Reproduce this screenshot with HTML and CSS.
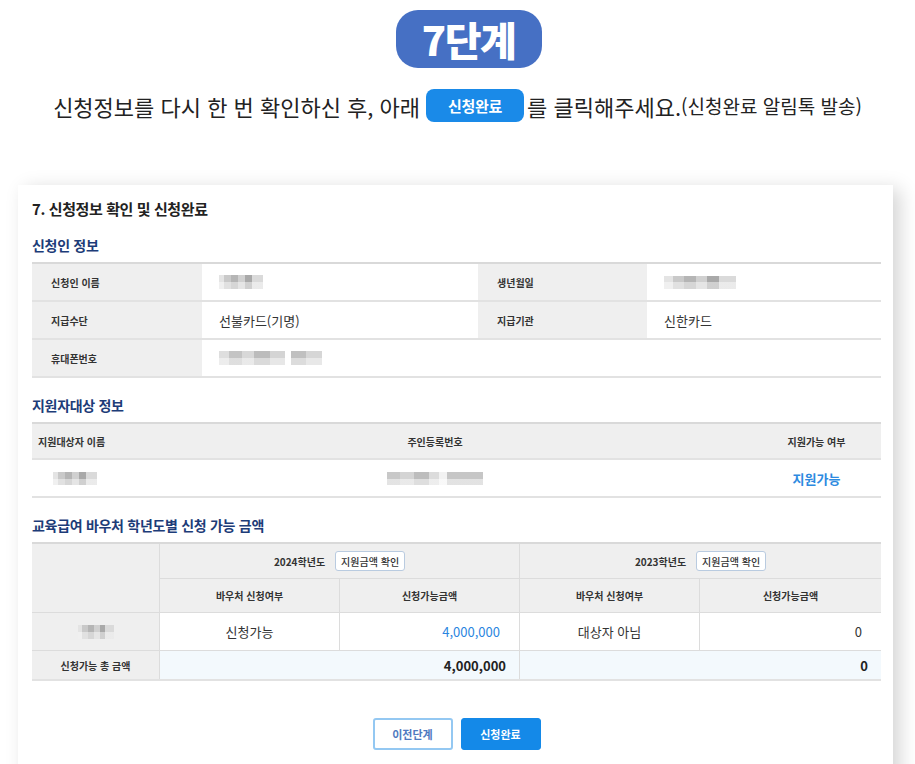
FILE: index.html
```html
<!DOCTYPE html>
<html lang="ko">
<head>
<meta charset="utf-8">
<title>7단계</title>
<link rel="stylesheet" href="styles.css">
</head>
<body>
<header class="step">
  <div class="badge">7단계</div>
  <p class="lead">신청정보를 다시 한 번 확인하신 후, 아래 <span class="pill">신청완료</span>를 클릭해주세요.<small>(신청완료 알림톡 발송)</small></p>
</header>

<main class="card">
  <h1 class="title">7. 신청정보 확인 및 신청완료</h1>

  <h2 class="sec">신청인 정보</h2>
  <div class="info">
    <div class="row">
      <div class="lbl">신청인 이름</div>
      <div class="val"><span class="blur b-name"></span></div>
      <div class="lbl">생년월일</div>
      <div class="val"><span class="blur b-birth"></span></div>
    </div>
    <div class="row">
      <div class="lbl">지급수단</div>
      <div class="val">선불카드(기명)</div>
      <div class="lbl">지급기관</div>
      <div class="val">신한카드</div>
    </div>
    <div class="row">
      <div class="lbl">휴대폰번호</div>
      <div class="val span3"><span class="blur b-phone"></span></div>
    </div>
  </div>

  <h2 class="sec">지원자대상 정보</h2>
  <div class="target">
    <div class="trow thead">
      <div class="c1 h">지원대상자 이름</div>
      <div class="c2">주인등록번호</div>
      <div class="c3">지원가능 여부</div>
    </div>
    <div class="trow tbody">
      <div class="c1"><span class="blur b-tname"></span></div>
      <div class="c2"><span class="blur b-rrn"></span></div>
      <div class="c3 ok">지원가능</div>
    </div>
  </div>

  <h2 class="sec">교육급여 바우처 학년도별 신청 가능 금액</h2>
  <div class="voucher">
    <div class="v-corner"></div>
    <div class="v-year y1">2024학년도 <button class="chk">지원금액 확인</button></div>
    <div class="v-year y2">2023학년도 <button class="chk">지원금액 확인</button></div>
    <div class="v-sub">바우처 신청여부</div>
    <div class="v-sub">신청가능금액</div>
    <div class="v-sub">바우처 신청여부</div>
    <div class="v-sub last">신청가능금액</div>

    <div class="v-lbl"><span class="blur b-vname"></span></div>
    <div class="v-cell center">신청가능</div>
    <div class="v-cell right blue">4,000,000</div>
    <div class="v-cell center">대상자 아님</div>
    <div class="v-cell right last">0</div>

    <div class="v-lbl v-tot">신청가능 총 금액</div>
    <div class="v-sum">4,000,000</div>
    <div class="v-sum last">0</div>
  </div>

  <div class="actions">
    <button class="btn prev">이전단계</button>
    <button class="btn done">신청완료</button>
  </div>
</main>
</body>
</html>
```

FILE: styles.css
```css
* { box-sizing: border-box; margin: 0; padding: 0; }

body {
  background: #ffffff;
  font-family: "Noto Sans CJK KR", "Noto Sans", sans-serif;
  color: #333;
  width: 915px;
  height: 764px;
  overflow: hidden;
}

.step {
  display: flex;
  flex-direction: column;
  align-items: center;
  padding-top: 10px;
}

.badge {
  height: 58px;
  width: 146px;
  margin-left: 22px;
  border-radius: 22px;
  background: #4670c4;
  color: #fff;
  font-size: 40px;
  font-weight: 900;
  display: flex;
  align-items: center;
  justify-content: center;
  letter-spacing: -1.5px;
}

.lead {
  margin-top: 21px;
  font-size: 22px;
  color: #222;
  letter-spacing: 0;
  display: flex;
  align-items: center;
  height: 33px;
  white-space: nowrap;
}

.lead small {
  font-size: 19px;
  letter-spacing: 0;
}

.pill {
  display: inline-flex;
  align-items: center;
  justify-content: center;
  width: 98px;
  height: 33px;
  margin: 0 3px 0 6px;
  border-radius: 8px;
  background: #1a8ae8;
  color: #fff;
  font-size: 15px;
  font-weight: 700;
  letter-spacing: -0.3px;
}

.card {
  margin: 63px 0 0 18px;
  width: 875px;
  background: #fff;
  padding: 14px 12px 40px 14px;
  box-shadow: 7px 4px 18px rgba(0, 0, 0, 0.17);
}

.title {
  font-size: 15px;
  font-weight: 700;
  color: #222;
  line-height: 20px;
  letter-spacing: -0.4px;
  margin-bottom: 16px;
}

.sec {
  font-size: 14px;
  font-weight: 700;
  color: #1d3c78;
  line-height: 20px;
  letter-spacing: -0.3px;
  margin: 17px 0 7px;
}

.title + .sec { margin-top: 0; }

/* blurred values */
.blur {
  display: inline-block;
  height: 14px;
  background:
    linear-gradient(to bottom, rgba(255,255,255,0) 50%, rgba(255,255,255,0.45) 50%),
    linear-gradient(to right, #e4e4e4 0 12%, #c9c9c9 12% 28%, #b5b5b5 28% 44%, #d0d0d0 44% 60%, #a9a9a9 60% 76%, #dadada 76% 100%);
  vertical-align: middle;
}

.b-name { width: 44px; }
.b-birth { width: 72px; height: 13px; }
.b-phone {
  width: 103px;
  background:
    linear-gradient(to bottom, rgba(255,255,255,0) 50%, rgba(255,255,255,0.45) 50%),
    linear-gradient(to right, #dedede 0 10%, #c4c4c4 10% 22%, #d8d8d8 22% 34%, #bcbcbc 34% 50%, #d4d4d4 50% 64%, #ffffff 64% 70%, #c0c0c0 70% 84%, #d6d6d6 84% 100%);
}
.b-tname { width: 44px; height: 13px; }
.b-rrn {
  width: 96px;
  height: 13px;
  background:
    linear-gradient(to bottom, rgba(255,255,255,0) 50%, rgba(255,255,255,0.5) 50%),
    linear-gradient(to right, #c8c8c8 0 14%, #d4d4d4 14% 28%, #bdbdbd 28% 44%, #dcdcdc 44% 54%, #f2f2f2 54% 62%, #c6c6c6 62% 100%);
}
.b-vname { width: 36px; height: 14px; }

/* applicant info */
.info {
  border-top: 2px solid #d9d9d9;
}

.info .row {
  display: grid;
  grid-template-columns: 170px 276px 169px 1fr;
  height: 38px;
  border-bottom: 2px solid #e2e2e2;
}

.lbl {
  background: #efefef;
  font-size: 10px;
  font-weight: 700;
  color: #333;
  padding-left: 19px;
  display: flex;
  align-items: center;
}

.val {
  font-size: 13px;
  color: #333;
  padding-left: 17px;
  display: flex;
  align-items: center;
}

.span3 { grid-column: span 3; }

/* target info */
.target {
  border-top: 2px solid #d9d9d9;
}

.trow {
  display: grid;
  grid-template-columns: 86px 634px 1fr;
  border-bottom: 2px solid #e2e2e2;
}

.thead {
  height: 36px;
  background: #efefef;
  font-size: 10px;
  font-weight: 700;
  color: #333;
}

.tbody {
  height: 38px;
}

.trow > div {
  display: flex;
  align-items: center;
  justify-content: center;
  white-space: nowrap;
}

.trow .c1.h {
  justify-content: flex-start;
  padding-left: 6px;
}

.ok {
  color: #2d8ae0;
  font-weight: 700;
  font-size: 13px;
}

/* voucher table */
.voucher {
  display: grid;
  grid-template-columns: 128px 180px 180px 180px 1fr;
  grid-template-rows: 35px 34px 38px 28px;
  border-top: 2px solid #d9d9d9;
  border-bottom: 2px solid #e2e2e2;
}

.voucher > div {
  display: flex;
  align-items: center;
  border-right: 1px solid #dcdcdc;
  border-bottom: 1px solid #dcdcdc;
  white-space: nowrap;
}

.voucher > div.last { border-right: none; }

.v-corner {
  grid-row: span 2;
  background: #efefef;
}

.v-year {
  grid-column: span 2;
  background: #efefef;
  justify-content: center;
  font-size: 10px;
  font-weight: 700;
  color: #333;
  gap: 10px;
}

.voucher > .v-year.y2 { border-right: none; }

.chk {
  font-family: inherit;
  font-size: 10px;
  font-weight: 500;
  color: #333;
  background: #fff;
  border: 1px solid #b9cbe0;
  border-radius: 3px;
  height: 20px;
  padding: 0 5px;
}

.v-sub {
  background: #efefef;
  justify-content: center;
  font-size: 10px;
  font-weight: 700;
  color: #333;
}

.v-lbl {
  background: #efefef;
  justify-content: center;
}

.v-tot {
  font-size: 10px;
  font-weight: 700;
  color: #333;
}

.voucher > .v-tot { border-bottom: none; }

.v-cell {
  font-size: 13px;
  color: #333;
}

.center { justify-content: center; }
.right { justify-content: flex-end; padding-right: 19px; }
.blue { color: #2a85e0; }

.v-sum {
  grid-column: span 2;
  background: #f3f9fd;
  justify-content: flex-end;
  padding-right: 13px;
  font-size: 13px;
  font-weight: 700;
  color: #222;
}

.voucher > .v-sum { border-bottom: none; }

/* actions */
.actions {
  display: flex;
  justify-content: center;
  gap: 8px;
  margin-top: 37px;
}

.btn {
  width: 80px;
  height: 32px;
  border-radius: 3px;
  font-family: inherit;
  font-size: 11px;
  font-weight: 700;
  cursor: pointer;
}

.prev {
  background: #fff;
  border: 2px solid #94c8f2;
  color: #4f79c0;
}

.done {
  background: #1489e8;
  border: 1px solid #1489e8;
  color: #fff;
}
```
